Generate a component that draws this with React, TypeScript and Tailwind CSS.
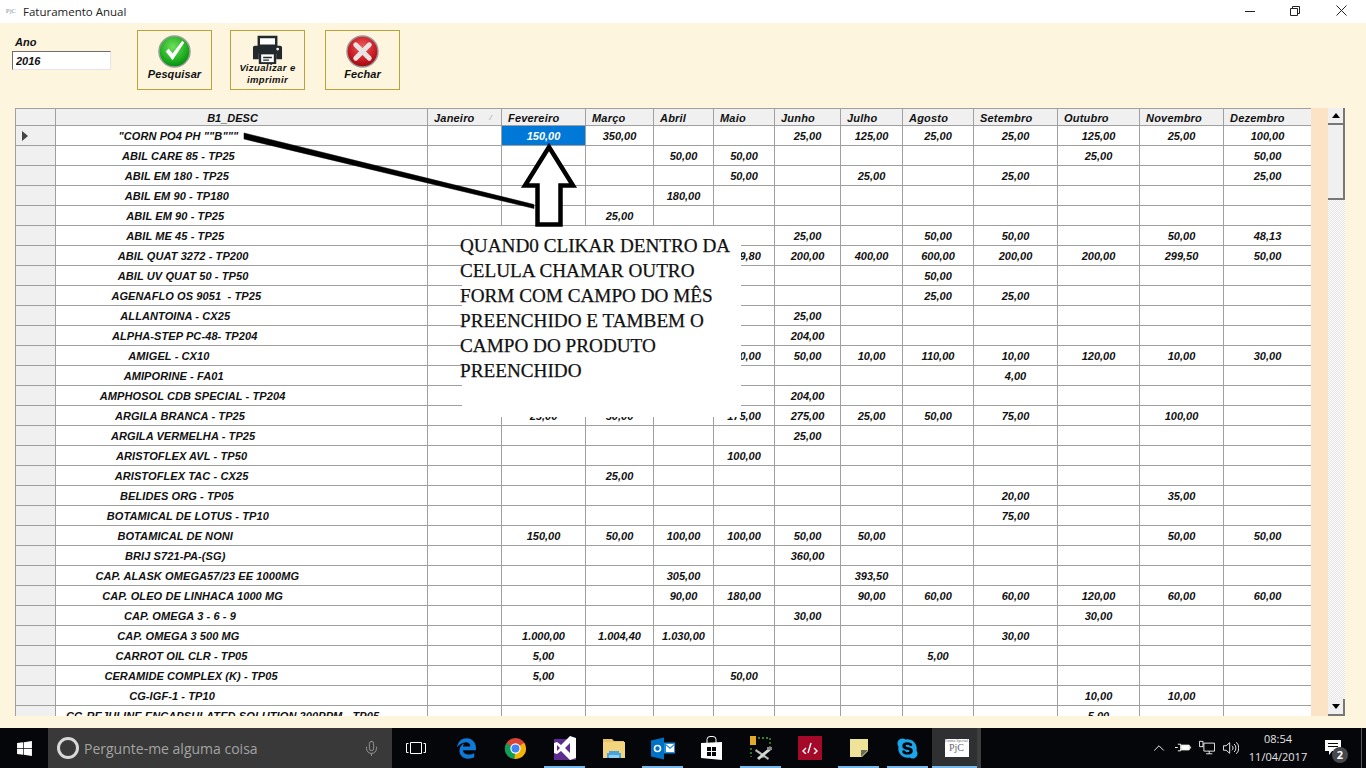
// Faturamento Anual: legacy WinForms grid with a pasted callout, on a Windows 10 taskbar.
import { ChevronUp, Mic } from "lucide-react";
import { FaEdgeLegacy, FaSkype, FaWindows } from "react-icons/fa6";

const MONTHS = ["Janeiro", "Fevereiro", "Março", "Abril", "Maio", "Junho", "Julho", "Agosto", "Setembro", "Outubro", "Novembro", "Dezembro"];

type Row = [string, Record<number, string>];

// month index (0 = Janeiro) -> value
const ROWS: Row[] = [
  ['"CORN PO4 PH ""B"""', { 1: "150,00", 2: "350,00", 5: "25,00", 6: "125,00", 7: "25,00", 8: "25,00", 9: "125,00", 10: "25,00", 11: "100,00" }],
  ["ABIL CARE 85 - TP25", { 3: "50,00", 4: "50,00", 9: "25,00", 11: "50,00" }],
  ["ABIL EM 180 - TP25", { 4: "50,00", 6: "25,00", 8: "25,00", 11: "25,00" }],
  ["ABIL EM 90 - TP180", { 3: "180,00" }],
  ["ABIL EM 90 - TP25", { 2: "25,00" }],
  ["ABIL ME 45 - TP25", { 5: "25,00", 7: "50,00", 8: "50,00", 10: "50,00", 11: "48,13" }],
  ["ABIL QUAT 3272 - TP200", { 4: "149,80", 5: "200,00", 6: "400,00", 7: "600,00", 8: "200,00", 9: "200,00", 10: "299,50", 11: "50,00" }],
  ["ABIL UV QUAT 50 - TP50", { 7: "50,00" }],
  ["AGENAFLO OS 9051  - TP25", { 7: "25,00", 8: "25,00" }],
  ["ALLANTOINA - CX25", { 5: "25,00" }],
  ["ALPHA-STEP PC-48- TP204", { 5: "204,00" }],
  ["AMIGEL - CX10", { 4: "120,00", 5: "50,00", 6: "10,00", 7: "110,00", 8: "10,00", 9: "120,00", 10: "10,00", 11: "30,00" }],
  ["AMIPORINE - FA01", { 8: "4,00" }],
  ["AMPHOSOL CDB SPECIAL - TP204", { 5: "204,00" }],
  ["ARGILA BRANCA - TP25", { 1: "25,00", 2: "50,00", 4: "175,00", 5: "275,00", 6: "25,00", 7: "50,00", 8: "75,00", 10: "100,00" }],
  ["ARGILA VERMELHA - TP25", { 5: "25,00" }],
  ["ARISTOFLEX AVL - TP50", { 4: "100,00" }],
  ["ARISTOFLEX TAC - CX25", { 2: "25,00" }],
  ["BELIDES ORG - TP05", { 8: "20,00", 10: "35,00" }],
  ["BOTAMICAL DE LOTUS - TP10", { 8: "75,00" }],
  ["BOTAMICAL DE NONI", { 1: "150,00", 2: "50,00", 3: "100,00", 4: "100,00", 5: "50,00", 6: "50,00", 10: "50,00", 11: "50,00" }],
  ["BRIJ S721-PA-(SG)", { 5: "360,00" }],
  ["CAP. ALASK OMEGA57/23 EE 1000MG", { 3: "305,00", 6: "393,50" }],
  ["CAP. OLEO DE LINHACA 1000 MG", { 3: "90,00", 4: "180,00", 6: "90,00", 7: "60,00", 8: "60,00", 9: "120,00", 10: "60,00", 11: "60,00" }],
  ["CAP. OMEGA 3 - 6 - 9", { 5: "30,00", 9: "30,00" }],
  ["CAP. OMEGA 3 500 MG", { 1: "1.000,00", 2: "1.004,40", 3: "1.030,00", 8: "30,00" }],
  ["CARROT OIL CLR - TP05", { 1: "5,00", 7: "5,00" }],
  ["CERAMIDE COMPLEX (K) - TP05", { 1: "5,00", 4: "50,00" }],
  ["CG-IGF-1 - TP10", { 9: "10,00", 10: "10,00" }],
  ["CG-REJULINE ENCAPSULATED SOLUTION 200PPM - TP05", { 9: "5,00" }],
];

const LINE = "border-[#a0a0a0]";

function CheckIcon() {
  return (
    <svg viewBox="0 0 34 34" className="h-[33px] w-[33px] shrink-0">
      <defs>
        <radialGradient id="ok" cx="45%" cy="35%" r="70%">
          <stop offset="0%" stopColor="#6fe05a" />
          <stop offset="70%" stopColor="#17a81c" />
          <stop offset="100%" stopColor="#0a7a12" />
        </radialGradient>
      </defs>
      <circle cx="17" cy="17" r="16" fill="url(#ok)" stroke="#9a9f9a" strokeWidth="1.5" />
      <path d="M8 17l3-3 4 5 10-13 2 2-12 18z" fill="#fff" />
    </svg>
  );
}

function CloseIcon() {
  return (
    <svg viewBox="0 0 34 34" className="h-[33px] w-[33px] shrink-0">
      <defs>
        <radialGradient id="no" cx="50%" cy="35%" r="70%">
          <stop offset="0%" stopColor="#ef5a5a" />
          <stop offset="70%" stopColor="#c0141c" />
          <stop offset="100%" stopColor="#850a10" />
        </radialGradient>
      </defs>
      <circle cx="17" cy="17" r="16" fill="url(#no)" stroke="#9a9a9a" strokeWidth="1.5" />
      <path d="M10 10l7 7 7-7M10 24l7-7 7 7" fill="none" stroke="#e8e4e4" strokeWidth="5" strokeLinecap="round" strokeLinejoin="round" />
    </svg>
  );
}

function PrinterIcon() {
  return (
    <svg viewBox="0 0 32 32" className="h-[31px] w-[31px] shrink-0">
      <path d="M7 2h18v9H7z" fill="#fff" stroke="#23282d" strokeWidth="2.5" />
      <path d="M3 11h26a2 2 0 012 2v12h-6v-6H7v6H1V13a2 2 0 012-2z" fill="#23282d" />
      <path d="M7 18h18v12H7z" fill="#23282d" />
      <path d="M9.5 20h13v8h-13z" fill="#fff" />
      <path d="M11.5 22.5h9v1.5h-9zM11.5 25.2h6v1.5h-6z" fill="#23282d" />
      <circle cx="26.5" cy="14.5" r="1.4" fill="#fff" />
    </svg>
  );
}

function ToolButton({ icon, label, small }: { icon: React.ReactNode; label: string; small?: boolean }) {
  return (
    <button className="flex h-[60px] w-[75px] flex-col items-center justify-start border border-[#b8a23a] bg-[#fdf5de] pt-[4px]">
      {icon}
      <span
        className={
          small
            ? "-mt-[4px] text-center text-[9.5px] font-bold italic leading-[12px] tracking-[0.4px] text-[#111]"
            : "-mt-[1px] text-[11px] font-bold italic leading-[14px] tracking-[0.1px] text-[#111]"
        }
      >
        {label}
      </span>
    </button>
  );
}

function Grid() {
  return (
    <div className="h-[608px] w-[1296px] shrink-0 overflow-hidden bg-white">
      <table className={`w-[1296px] table-fixed border-collapse border-t border-l ${LINE} text-[11px] font-bold italic leading-[14px] text-[#111]`}>
        <colgroup>
          <col className="w-[40px]" />
          <col className="w-[372px]" />
          <col className="w-[74px]" />
          <col className="w-[84px]" />
          <col className="w-[68px]" />
          <col className="w-[60px]" />
          <col className="w-[61px]" />
          <col className="w-[66px]" />
          <col className="w-[62px]" />
          <col className="w-[71px]" />
          <col className="w-[84px]" />
          <col className="w-[82px]" />
          <col className="w-[84px]" />
          <col className="w-[88px]" />
        </colgroup>
        <thead>
          <tr className="h-[17px] bg-[#f0f0f0]">
            <th className={`border-r border-b ${LINE}`} />
            <th className={`border-r border-b ${LINE} pr-[18px] pt-[1px] text-center font-bold`}>B1_DESC</th>
            {MONTHS.map((m, i) => (
              <th key={m} className={`relative border-r border-b ${LINE} pl-[6px] pt-[1px] text-left font-bold tracking-[0.2px]`}>
                {m}
                {i === 0 && <span className="absolute right-[9px] top-[2px] text-[8px] font-normal text-[#999]">/</span>}
              </th>
            ))}
          </tr>
        </thead>
        <tbody>
          {ROWS.map(([name, values], r) => (
            <tr key={name} className="h-5">
              <td className={`border-r border-b ${LINE} bg-[#f0f0f0] p-0`}>
                {r === 0 && (
                  <svg viewBox="0 0 6 10" className="ml-[6px] h-[10px] w-[6px]">
                    <path d="M0 0l6 5-6 5z" fill="#444" />
                  </svg>
                )}
              </td>
              <td className={`overflow-hidden border-r border-b ${LINE} p-0 text-center tracking-[0.1px] whitespace-pre`}>{name.padEnd(59)}</td>
              {MONTHS.map((m, i) => (
                <td
                  key={m}
                  className={`border-r border-b ${LINE} p-0 text-center ${r === 0 && i === 1 ? "bg-[#0078d7] text-white" : ""}`}
                >
                  {values[i]}
                </td>
              ))}
            </tr>
          ))}
        </tbody>
      </table>
    </div>
  );
}

function ScrollButton({ up }: { up?: boolean }) {
  return (
    <div className="flex h-[17px] w-[17px] shrink-0 items-center justify-center border-r-2 border-b-2 border-r-[#777] border-b-[#777] bg-[#f0f0f0]">
      <svg viewBox="0 0 8 5" className="h-[5px] w-[8px]">
        <path d={up ? "M0 5l4-5 4 5z" : "M0 0l4 5 4-5z"} fill="#000" />
      </svg>
    </div>
  );
}

function Scrollbar() {
  return (
    <div className="flex h-[608px] w-[17px] shrink-0 flex-col bg-[repeating-conic-gradient(#e6e6e6_0_25%,#fbfbfb_0_50%)] bg-[length:2px_2px]">
      <ScrollButton up />
      <div className="h-[75px] shrink-0 border-r-2 border-b-2 border-r-[#777] border-b-[#777] bg-[#f0f0f0]" />
      <div className="flex-1" />
      <ScrollButton />
    </div>
  );
}

// Taskbar button; `open` marks a running app with the blue underline.
function TaskItem({ children, open, active }: { children: React.ReactNode; open?: boolean; active?: boolean }) {
  return (
    <div className={`relative flex h-10 w-[49px] shrink-0 items-center justify-center ${active ? "bg-[#2f3032]" : ""}`}>
      {children}
      {open && <div className="absolute right-[4px] bottom-0 left-[4px] h-[2px] bg-[#76b9ed]" />}
      {active && <div className="absolute right-0 bottom-0 left-0 h-[2px] bg-[#76b9ed]" />}
      {active && <div className="absolute top-0 right-0 bottom-0 w-[4px] bg-[#3d3e40]" />}
    </div>
  );
}

function Taskbar() {
  return (
    <div className="flex h-10 shrink-0 items-center bg-[#05060a] font-['Open_Sans',sans-serif] text-white">
      <div className="flex h-10 w-12 shrink-0 items-center justify-center">
        <FaWindows className="h-[17px] w-[17px]" />
      </div>
      <div className="flex h-10 w-[344px] shrink-0 items-center bg-[#393939] pl-[9px] pr-[12px] text-[#a3a3a3]">
        <div className="h-[22px] w-[22px] shrink-0 rounded-full border-[3px] border-[#d8d8d8]" />
        <span className="ml-[5px] flex-1 text-[14px]">Pergunte-me alguma coisa</span>
        <Mic className="h-[17px] w-[17px]" strokeWidth={1.2} />
      </div>
      <div className="flex w-[50px] shrink-0 justify-center pr-[2px]">
        <svg viewBox="0 0 20 14" className="h-[14px] w-[20px]" fill="none" stroke="#fff" strokeWidth="1">
          <path d="M4.5 1.5h11v11h-11zM2.5 2.5H.5v9h2M17.5 2.5h2v9h-2" />
        </svg>
      </div>
      <TaskItem>
        <FaEdgeLegacy className="h-[21px] w-[21px] text-[#0f7ad6]" />
      </TaskItem>
      <TaskItem>
        <svg viewBox="0 0 24 24" className="h-[23px] w-[23px]">
          <circle cx="12" cy="12" r="11" fill="#db4437" />
          <path d="M12 12L2.5 6.5A11 11 0 002 17a11 11 0 0010 6z" fill="#0f9d58" />
          <path d="M12 12l-1 11A11 11 0 0023 12a11 11 0 00-2-6z" fill="#f4b400" />
          <circle cx="12" cy="12" r="5.4" fill="#fff" />
          <circle cx="12" cy="12" r="4.2" fill="#4285f4" />
        </svg>
      </TaskItem>
      <TaskItem open>
        <svg viewBox="0 0 22 24" className="h-[24px] w-[22px]">
          <path d="M0 3h22v21H0z" fill="#5c2d91" />
          <path d="M16 0l6 2v20l-6 2-9-9-4 3-3-1V7l3-1 4 3zM16 7l-5 5 5 5zM3 9v6l3-3z" fill="#fff" fillRule="evenodd" />
        </svg>
      </TaskItem>
      <TaskItem>
        <svg viewBox="0 0 22 19" className="h-[19px] w-[22px]">
          <path d="M0 0h9l2 2h10v4H0z" fill="#e8c468" />
          <path d="M0 3h22v16H0z" fill="#f3d57f" />
          <path d="M6 12h10v2h2v5h-2v-3H6v3H4v-5h2z" fill="#4aa3df" />
          <path d="M6 16h10v3H6z" fill="#8bd0f5" />
        </svg>
      </TaskItem>
      <TaskItem open>
        <svg viewBox="0 0 24 22" className="h-[23px] w-[24px]">
          <path d="M0 3l13-3v22L0 19z" fill="#0072c6" />
          <path d="M13 5h11v11H13z" fill="#1b8fe0" />
          <path d="M15 6.5h8l-4 3.5zM15 8l4 3.5L23 8v6.5h-8z" fill="#fff" />
          <circle cx="6.5" cy="11" r="3" fill="none" stroke="#fff" strokeWidth="1.6" />
        </svg>
      </TaskItem>
      <TaskItem>
        <svg viewBox="0 0 22 24" className="h-[24px] w-[22px]" fill="#fff">
          <path d="M0 7l21 -1v18L0 22z" />
          <path d="M6 7V3.5A3 3 0 019 .5h3a3 3 0 013 3V7" fill="none" stroke="#fff" strokeWidth="1" />
          <path d="M6 11h4v4H6zM11 11h4v4h-4zM6 16h4v4H6zM11 16h4v4h-4z" fill="#05060a" />
        </svg>
      </TaskItem>
      <TaskItem open>
        <svg viewBox="0 0 24 24" className="h-[24px] w-[24px]">
          <path d="M1 0h6v9H1z" fill="#e2a92b" />
          <path d="M2 12v9M9 2h12v10M13 21h4" fill="none" stroke="#45a845" strokeWidth="1.3" strokeDasharray="2 2" />
          <path d="M7 13l13 9-1 2L6 15z" fill="#b9b9b9" />
          <path d="M20 12l-12 10 2 2 12-10z" fill="#d8d8d8" />
          <path d="M18 11h5v3h-5z" fill="#8a8a8a" />
        </svg>
      </TaskItem>
      <TaskItem>
        <div className="flex h-6 w-6 items-center justify-center bg-[#a4092a]">
          <svg viewBox="0 0 16 12" className="h-3 w-4" fill="none" stroke="#fff" strokeWidth="1.4">
            <path d="M4 6L1 9l3 3M12 6l3 3-3 3M9 1L6 11" />
          </svg>
        </div>
      </TaskItem>
      <TaskItem open>
        <svg viewBox="0 0 18 18" className="h-[18px] w-[18px]">
          <path d="M0 0h18v12l-6 6H0z" fill="#efe39a" />
          <path d="M18 11l-7 7v-7z" fill="#6d6a55" />
        </svg>
      </TaskItem>
      <TaskItem open>
        <FaSkype className="h-[23px] w-[23px] text-[#1aa6e8]" />
      </TaskItem>
      <TaskItem active>
        <div className="flex h-[18px] w-6 flex-col items-center bg-white text-[#667] font-['Liberation_Serif',serif] leading-none">
          <span className="text-[4px]">Farma Special</span>
          <span className="text-[10px]">PjC</span>
        </div>
      </TaskItem>
      <div className="flex-1" />
      <ChevronUp className="mr-[7px] h-[18px] w-[18px]" strokeWidth={1.2} />
      <svg viewBox="0 0 18 12" className="mr-[7px] h-[12px] w-[17px]" fill="none" stroke="#fff">
        <path d="M0 5.5h3M3 2h3v7H3M6 3h9v5H6" />
        <path d="M7 3.5h8v4H7z" fill="#fff" />
        <path d="M16.5 4.5v2" />
      </svg>
      <svg viewBox="0 0 18 16" className="mr-[8px] h-[16px] w-[16px]" fill="none" stroke="#fff">
        <path d="M5.5 2.5h12v9h-12zM.5.5h4v6h-4zM11.5 11.5v3M8 14.5h7" />
      </svg>
      <svg viewBox="0 0 18 14" className="mr-[5px] h-[14px] w-[16px]" fill="none" stroke="#fff">
        <path d="M.5 4.5h3l4-3.5v12l-4-3.5h-3zM10 4.5a3 3 0 010 5M12.5 2.5a6 6 0 010 9M15 .5a9 9 0 010 13" />
      </svg>
      <div className="flex w-[68px] flex-col items-center text-[11px] leading-[18px] text-[#e4e4e4]">
        <span>08:54</span>
        <span>11/04/2017</span>
      </div>
      <div className="relative ml-[13px] flex h-10 w-[36px] items-center">
        <svg viewBox="0 0 16 15" className="mb-[1px] h-[15px] w-[16px]">
          <path d="M0 0h16v11H7l-3 4v-4H0z" fill="#fff" />
          <path d="M3 3h10v1H3zM3 6h10v1H3z" fill="#05060a" />
        </svg>
        <span className="absolute right-[13px] bottom-[5px] flex h-[16px] w-[16px] items-center justify-center rounded-full bg-[#46484c] text-[11px] font-bold">2</span>
      </div>
      <div className="h-10 w-px bg-[#55575a]" />
      <div className="w-[4px]" />
    </div>
  );
}

export default function App() {
  return (
    <div className="relative flex h-[768px] w-[1366px] flex-col overflow-hidden font-['Liberation_Sans',sans-serif]">
      <div className="flex h-[23px] shrink-0 items-center bg-white pl-[3px]">
        <div className="flex h-[13px] w-[16px] items-center justify-center text-[7px] leading-none text-[#8a98a5] font-['Liberation_Serif',serif]">PjC</div>
        <span className="ml-[4px] font-['Open_Sans',sans-serif] text-[11.5px] text-[#222]">Faturamento Anual</span>
        <div className="flex-1" />
        <svg viewBox="0 0 10 10" className="mr-[35px] mb-[2px] h-[10px] w-[10px]" fill="none" stroke="#222">
          <path d="M0 5.5h10" />
        </svg>
        <svg viewBox="0 0 10 10" className="mr-[36px] mb-[2px] h-[10px] w-[10px]" fill="none" stroke="#222">
          <path d="M.5 2.5h7v7h-7zM2.5 2.5v-2h7v7h-2" />
        </svg>
        <svg viewBox="0 0 11 11" className="mr-[19px] mb-[2px] h-[11px] w-[11px]" fill="none" stroke="#222">
          <path d="M.5.5l10 10M10.5.5l-10 10" />
        </svg>
      </div>

      <div className="flex min-h-0 flex-1 flex-col bg-[#fdf5de]">
        <div className="flex h-[85px] shrink-0 pl-[12px] pt-[7px]">
          <div className="flex w-[99px] flex-col pt-[6px]">
            <label className="pl-[3px] text-[11px] font-bold italic leading-[13px] text-[#111]">Ano</label>
            <input
              readOnly
              value="2016"
              className="mt-[2px] h-[19px] w-[99px] border border-[#e4e4e4] border-t-[#6d6d6d] border-l-[#6d6d6d] bg-white pl-[3px] text-[11px] font-bold italic text-[#111]"
            />
          </div>
          <div className="ml-[26px] flex gap-[18px]">
            <ToolButton icon={<CheckIcon />} label="Pesquisar" />
            <ToolButton icon={<PrinterIcon />} label="Vizualizar e imprimir" small />
            <div className="ml-[2px]">
              <ToolButton icon={<CloseIcon />} label="Fechar" />
            </div>
          </div>
        </div>

        <div className="flex shrink-0 pl-[15px]">
          <Grid />
          <div className="h-[608px] w-[17px] shrink-0 bg-[#fde3c5]" />
          <Scrollbar />
        </div>
      </div>

      <Taskbar />

      {/* pasted annotation: white box, arrows and note drawn over the grid */}
      <div className="absolute left-[462px] top-[226px] h-[191px] w-[279px] bg-white font-['Liberation_Serif',serif] text-[19.2px] leading-[25px] text-[#111] [-webkit-text-stroke:0.25px_#111]">
        <p className="-ml-[2px] mt-[7px] w-[280px]">
          QUAND0 CLIKAR DENTRO DA
          <br />
          CELULA CHAMAR OUTRO
          <br />
          FORM COM CAMPO DO MÊS
          <br />
          PREENCHIDO E TAMBEM O
          <br />
          CAMPO DO PRODUTO
          <br />
          PREENCHIDO
        </p>
      </div>
      <svg viewBox="0 0 1366 768" className="pointer-events-none absolute left-0 top-0 h-[768px] w-[1366px]" fill="none" stroke="#000">
        <path d="M244 133L244 139L534 208.5L534 204.5Z" fill="#000" strokeWidth="0.5" />
        <path d="M537.5 224.5V185.5H525L549 147 573 185.5H560.5V224.5Z" fill="#fff" strokeWidth="4.5" strokeLinejoin="miter" />
      </svg>
    </div>
  );
}
